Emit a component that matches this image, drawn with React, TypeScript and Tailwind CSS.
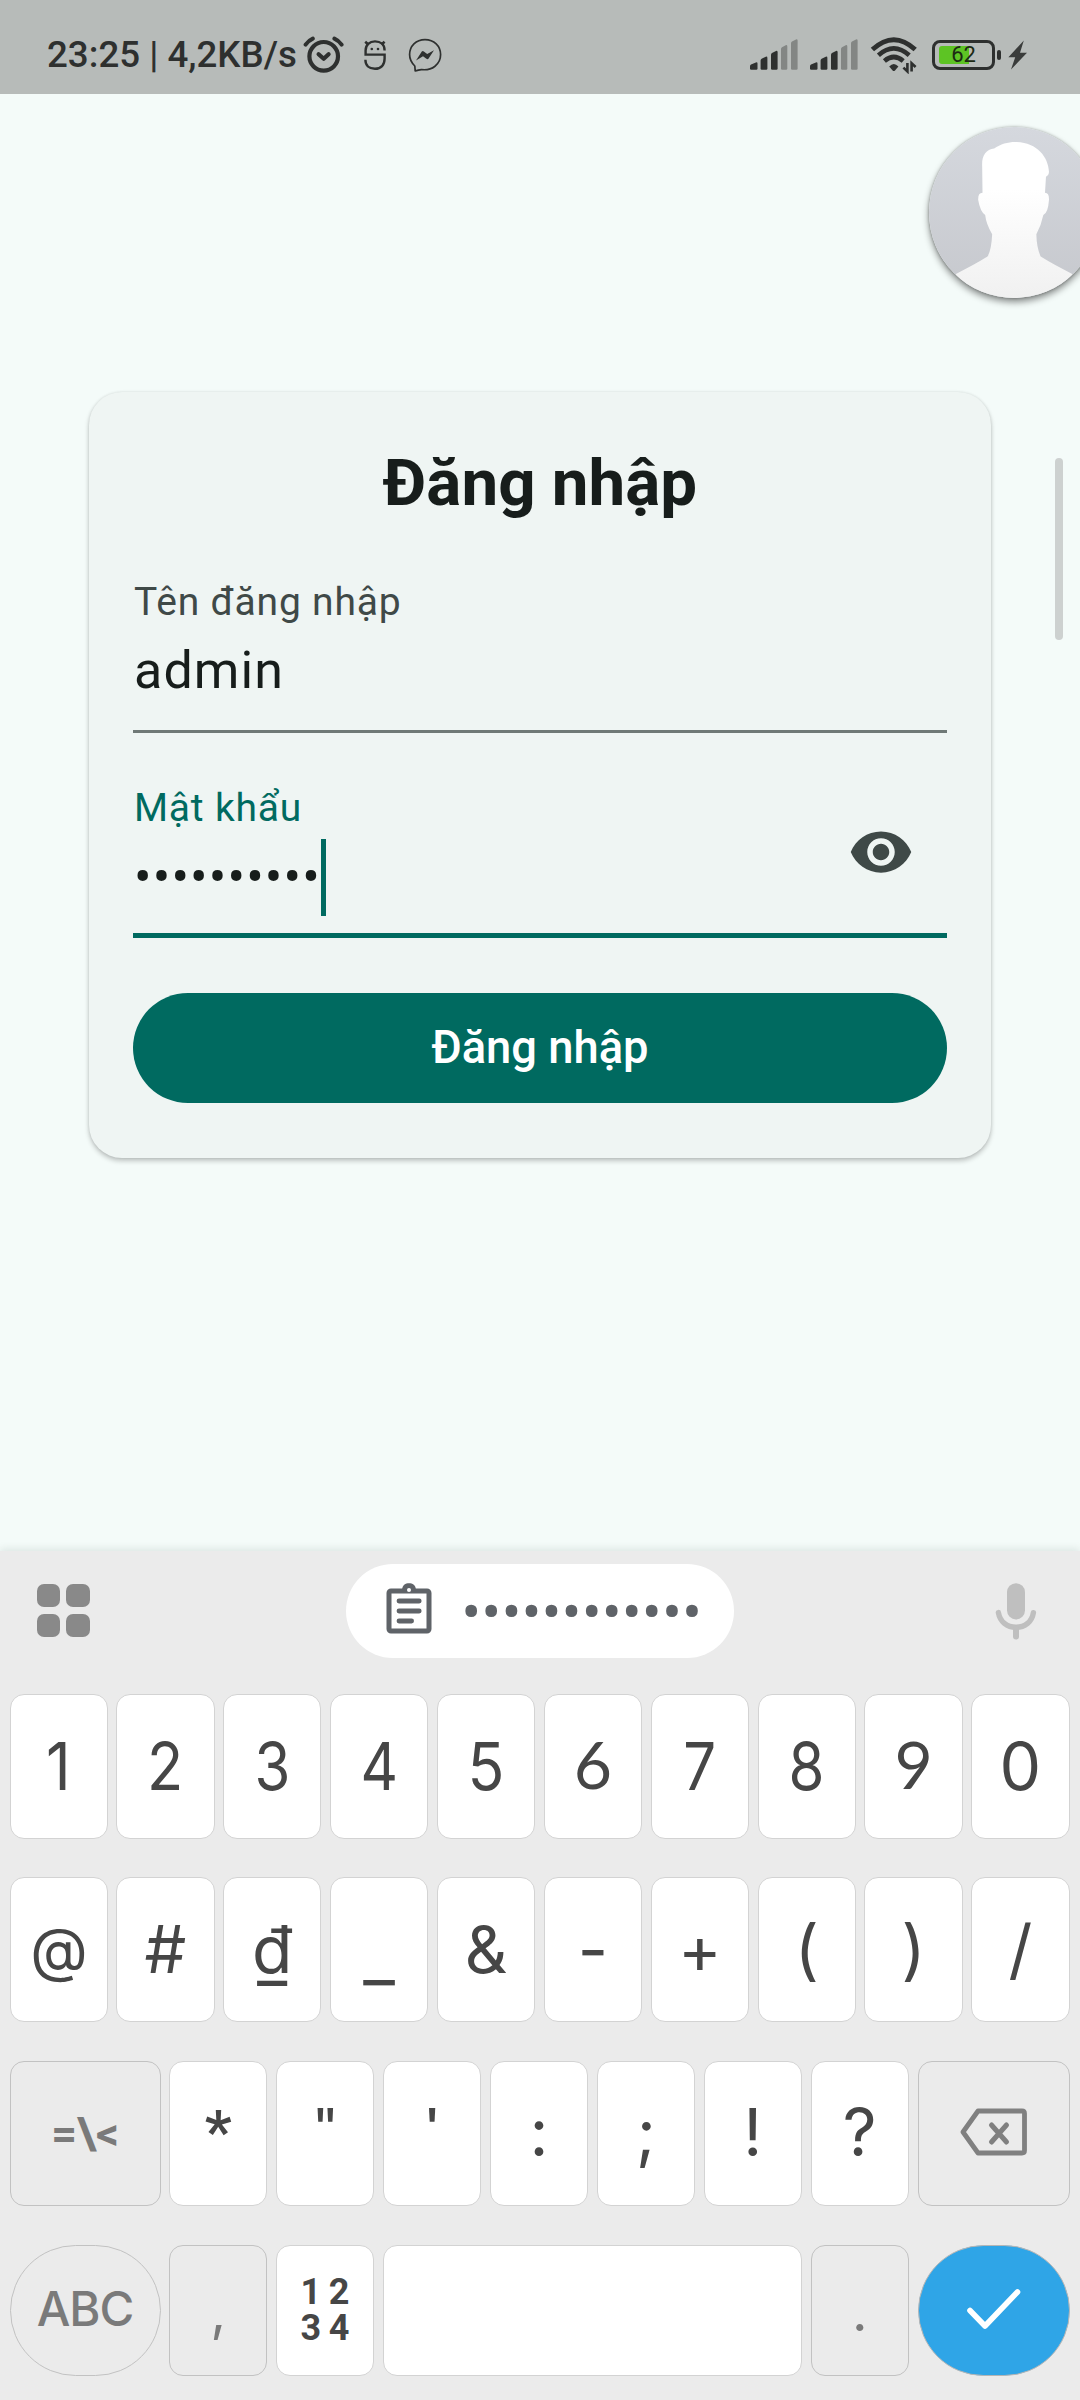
import type { ReactNode } from "react";

/* ---------- status bar icons ---------- */

function AlarmIcon() {
  return (
    <svg className="ml-[6px] h-[40px] w-[42px]" viewBox="303 34 42 40" fill="none" stroke="#2e302f" strokeLinecap="round" strokeLinejoin="round">
      <circle cx="323.7" cy="55.3" r="14.3" strokeWidth="4.2" />
      <path d="M305.6 43.6Q308.5 39.5 312.8 37.6M341.6 43.6Q338.7 39.5 334.4 37.6" strokeWidth="4" />
      <path d="M318.6 53.2L323.7 57.8L328.6 53.2" strokeWidth="4.2" />
    </svg>
  );
}

function RobotIcon() {
  return (
    <svg className="ml-[17px] h-[34px] w-[26px]" viewBox="362 37 26 34" fill="none" stroke="#2e302f" strokeWidth="2.4">
      <path d="M384.6 49.5C384.6 43.5 380.5 40.4 375 40.4C369.5 40.4 365.6 44 365.6 49.5V53.6H384.6V57.5C384.6 64 381 67.8 375 67.8C369 67.8 365.4 64.5 365.4 58.8" />
      <path d="M365.2 40.8L368.4 43.6M384.6 40.8L381.4 43.6" strokeWidth="2.6" />
      <circle cx="371.8" cy="48" r="1.3" fill="#2e302f" stroke="none" />
      <circle cx="378" cy="48" r="1.3" fill="#2e302f" stroke="none" />
    </svg>
  );
}

function MessengerIcon() {
  return (
    <svg className="ml-[19px] h-[36px] w-[36px]" viewBox="407 36 36 36" fill="none" stroke="#2e302f">
      <path d="M425 38.6C416 38.6 409.6 45 409.6 53.6C409.6 58.6 411.6 62 414.8 65L415.2 69.9C418 69.6 419.4 68.4 421.6 68.6C432 69.8 440.6 63.4 440.6 53.6C440.6 45 434 38.6 425 38.6Z" strokeWidth="1.7" strokeLinejoin="round" />
      <path d="M416 59.6L421.8 50.6Q422.6 49.6 423.8 50.4L427.2 53L434 49.2L428.6 57.6Q427.8 58.8 426.4 57.8L423 55.2Z" fill="#2e302f" stroke="none" />
    </svg>
  );
}

const bars = [
  { x: 0, w: 7.5, top: 23, on: true },
  { x: 10.6, w: 6.8, top: 17.3, on: true },
  { x: 21, w: 6.6, top: 11.5, on: true },
  { x: 31, w: 6.3, top: 5.8, on: false },
  { x: 41, w: 6.6, top: 0, on: false },
];

function SignalIcon() {
  return (
    <svg className="h-[31px] w-[48px]" viewBox="0 0 48 31">
      {bars.map((b) => (
        <path
          key={b.x}
          d={`M${b.x} ${b.top + 4.2}Q${b.x} ${b.top + 3} ${b.x + 1} ${b.top + 2.4}L${b.x + b.w - 1.6} ${b.top + 0.4}Q${b.x + b.w} ${b.top} ${b.x + b.w} ${b.top + 1.6}V29.6Q${b.x + b.w} 30.8 ${b.x + b.w - 1.2} 30.8H${b.x + 1.2}Q${b.x} 30.8 ${b.x} 29.6Z`}
          fill={b.on ? "#2e302f" : "#838684"}
        />
      ))}
    </svg>
  );
}

function WifiIcon() {
  return (
    <svg className="ml-[12px] h-[38px] w-[48px]" viewBox="870 36 48 38" fill="none" stroke="#2e302f">
      <path d="M872.4 49.6Q893.8 29.8 915.2 49.6" strokeWidth="4.8" />
      <path d="M878.4 55.3Q893.8 41.6 909.2 55.3" strokeWidth="4.6" />
      <path d="M884.4 61Q893.8 53 903.2 61" strokeWidth="4.6" />
      <path d="M889.2 66.6Q893.8 61.4 898.4 66.6L895 70.4Q893.8 71.4 892.6 70.4Z" fill="#2e302f" stroke="none" />
      <path d="M907.4 63V71.4L903.4 67.6M911.6 71.4V63.2L915.6 67" strokeWidth="2.6" />
    </svg>
  );
}

function Battery() {
  return (
    <div className="ml-[14px] flex items-center">
      <div className="relative flex h-[30px] w-[63px] items-center rounded-[8px] border-3 border-[#2e302f] pl-[4px]">
        <div className="h-[18px] w-[30px] rounded-l-[3px] bg-[#5dc424]" />
        <span className="absolute inset-0 flex items-center justify-center text-[22px] leading-none text-[#1c2a14]">62</span>
      </div>
      <div className="ml-[2px] h-[10px] w-[4px] rounded-[2px] bg-[#2e302f]" />
      <svg className="ml-[7px] h-[30px] w-[20px]" viewBox="1008 39 20 30" fill="#3a3c3b">
        <path d="M1023.8 39.6L1008.4 56.2H1015.2L1011 68.6L1027 51.8H1020Z" />
      </svg>
    </div>
  );
}

function StatusBar() {
  return (
    <div className="flex h-[94px] items-center justify-between bg-[#b7bbb9] pr-[52px] pl-[47px] pt-[15px]">
      <div className="flex items-center">
        <span className="w-[250px] whitespace-nowrap text-[36.7px] leading-[44px] font-medium text-[#2e302f]">23:25 | 4,2KB/s</span>
        <AlarmIcon />
        <RobotIcon />
        <MessengerIcon />
      </div>
      <div className="flex items-center">
        <SignalIcon />
        <div className="w-[12px]" />
        <SignalIcon />
        <WifiIcon />
        <Battery />
      </div>
    </div>
  );
}

function ChatHead() {
  return (
    <div className="absolute top-[127px] left-[928.5px] h-[170.5px] w-[170.5px] overflow-hidden rounded-full shadow-[0_4px_7px_rgba(0,0,0,0.45),0_0_3px_rgba(0,0,0,0.3)]">
      <svg className="h-full w-full" viewBox="684 380 513 513">
        <defs>
          <linearGradient id="backdrop" x1="0" y1="0" x2="0" y2="1">
            <stop offset="0" stopColor="#d5d8de" />
            <stop offset="1" stopColor="#c6c8cd" />
          </linearGradient>
          <linearGradient id="figure" x1="0" y1="0" x2="0" y2="1">
            <stop offset="0.3" stopColor="#ffffff" />
            <stop offset="1" stopColor="#f0f0f0" />
          </linearGradient>
        </defs>
        <rect x="684" y="380" width="513" height="513" fill="url(#backdrop)" />
        <path
          d="M844 500C842 466 855 448 880 445C900 430 925 424 948 425C1010 428 1043 470 1045 515Q1045 525 1036 530L1033 578Q1046 578 1045 600Q1042 640 1028 645Q1022 675 1007 703Q1008 745 1020 770Q1060 795 1115 822L1130 900H750L765 822Q820 795 860 770Q872 750 874 703Q856 672 853 645Q838 635 832 600Q831 578 845 578Z"
          fill="url(#figure)"
        />
      </svg>
    </div>
  );
}

/* ---------- login form ---------- */

function LoginCard() {
  return (
    <div className="mx-[89px] mt-[298px] h-[766px] rounded-[33px] bg-[#eff5f3] px-[44px] pt-[53px] shadow-[0_3px_5px_rgba(0,0,0,0.22),0_0_3px_rgba(0,0,0,0.1)]">
      <h1 className="text-center text-[65.5px] leading-[76px] font-bold text-[#171d1b]">Đăng nhập</h1>
      <div className="mt-[58px] h-[154px] border-b-3 border-[#6f7976]">
        <div className="pl-px text-[39px] leading-[46px] tracking-[0.8px] text-[#3f4947]">Tên đăng nhập</div>
        <div className="mt-[16px] pl-px text-[52px] leading-[60px] tracking-[1.1px] text-[#171d1b]">admin</div>
      </div>
      <div className="mt-[52px] flex h-[153px] border-b-5 border-[#006a60]">
        <div className="flex-1">
          <div className="pl-px text-[39px] leading-[46px] tracking-[0.8px] text-[#006a60]">Mật khẩu</div>
          <div className="mt-[8px] flex h-[77px] items-center">
            <span className="pl-px text-[52px] leading-[75px] tracking-[1.15px] text-[#171d1b]">••••••••••</span>
            <div className="h-[77px] w-[5.5px] bg-[#006a60]" />
          </div>
        </div>
        <svg className="mt-[34px] mr-[33px] h-[66px] w-[66px]" viewBox="0 0 24 24" fill="#3f4947">
          <path d="M12 4.5C7 4.5 2.73 7.61 1 12c1.73 4.39 6 7.5 11 7.5s9.27-3.11 11-7.5c-1.73-4.39-6-7.5-11-7.5zM12 17c-2.76 0-5-2.24-5-5s2.24-5 5-5 5 2.24 5 5-2.24 5-5 5zm0-8c-1.66 0-3 1.34-3 3s1.34 3 3 3 3-1.34 3-3-1.34-3-3-3z" />
        </svg>
      </div>
      <button className="mt-[55px] block h-[110px] w-full rounded-full bg-[#006a60] text-[45.3px] font-medium text-white">Đăng nhập</button>
    </div>
  );
}

/* ---------- keyboard ---------- */

function Key({ children, className = "" }: { children?: ReactNode; className?: string }) {
  return (
    <div className={`flex items-center justify-center border ${className}`}>{children}</div>
  );
}

const white = "rounded-[14px] border-[#d3d3d3] bg-white pb-[2px] text-[#464646] text-[66px] leading-none";
const grey = "rounded-[14px] border-[#c2c2c2] bg-[#ebebeb] text-[#7a7a7a]";

const glyphStyle: Record<string, string> = {
  "1": "scale-x-92",
  "2": "scale-x-90",
  "3": "scale-x-88",
  "4": "scale-x-88",
  "5": "scale-x-92",
  "6": "pb-[4px] font-[Lato,sans-serif]",
  "7": "scale-x-88",
  "8": "scale-x-88",
  "9": "pb-[4px] font-[Lato,sans-serif]",
  "_": "pt-[14px] scale-x-105",
  "@": "scale-90",
  "*": "font-[Roboto,sans-serif] text-[60px] font-semibold",
  "\"": "origin-[50%_9px] scale-x-90 scale-y-75",
  "'": "origin-[50%_9px] scale-y-75",
};

function Glyph({ char }: { char: string }) {
  return <span className={`inline-block ${glyphStyle[char] ?? ""}`}>{char}</span>;
}

function GridIcon() {
  return (
    <div className="grid h-[53px] w-[53px] grid-cols-2 gap-[6.5px]">
      <div className="rounded-[7px] bg-[#898989]" />
      <div className="rounded-[7px] bg-[#898989]" />
      <div className="rounded-[7px] bg-[#898989]" />
      <div className="rounded-[7px] bg-[#898989]" />
    </div>
  );
}

function ClipboardIcon() {
  return (
    <svg className="mb-[3px] h-[52px] w-[46px]" viewBox="386 1583 46 52" fill="none" stroke="#5f6368" strokeLinecap="round">
      <rect x="389" y="1591" width="40" height="40" rx="2" strokeWidth="5" />
      <path d="M402 1590.5C402 1585 405.6 1583.2 409 1583.2C412.4 1583.2 416 1585 416 1590.5Z" fill="#5f6368" stroke="none" />
      <circle cx="409" cy="1590" r="2" fill="#fff" stroke="none" />
      <path d="M399 1601H419.2M399 1611H419.2M399 1621H411.6" strokeWidth="4.8" />
    </svg>
  );
}

function MicIcon() {
  return (
    <svg className="h-[58px] w-[42px]" viewBox="995 1581 42 58" fill="none" stroke="#bfbfbf" strokeLinecap="round">
      <path d="M1016 1591.2V1609.4" strokeWidth="18" />
      <path d="M998.4 1611.6C1000 1620.8 1007 1626.3 1016 1626.3C1025 1626.3 1032 1620.8 1033.4 1611.6" strokeWidth="5.4" />
      <path d="M1016 1627V1635.6" strokeWidth="6" />
    </svg>
  );
}

const digits = ["1", "2", "3", "4", "5", "6", "7", "8", "9", "0"];
const symbols = ["@", "#", "₫", "_", "&", "-", "+", "(", ")", "/"];
const marks = ["*", "\"", "'", ":", ";", "!", "?"];

function Keyboard() {
  return (
    <div className="mt-auto h-[849px] bg-[#ebebeb] pr-[10.5px] pl-[9.5px] font-[Inter,sans-serif] shadow-[0_-2px_8px_rgba(0,40,30,0.1)]">
      <div className="flex h-[143px] items-center justify-between pr-[33px] pb-[24px] pl-[27px]">
        <GridIcon />
        <div className="mr-[5px] flex h-[94px] w-[388px] items-center rounded-full bg-white pl-[40px]">
          <ClipboardIcon />
          <span className="ml-[30px] pt-[2px] font-[Roboto,sans-serif] text-[58px] leading-none tracking-[0.5px] text-[#5f6368]">••••••••••••</span>
        </div>
        <MicIcon />
      </div>
      <div className="grid h-[145px] grid-cols-10 gap-[8.7px]">
        {digits.map((d) => (
          <Key key={d} className={white}>
            <Glyph char={d} />
          </Key>
        ))}
      </div>
      <div className="mt-[38.4px] grid h-[145px] grid-cols-10 gap-[8.7px]">
        {symbols.map((s) => (
          <Key key={s} className={white}>
            <Glyph char={s} />
          </Key>
        ))}
      </div>
      <div className="mt-[38.6px] grid h-[145px] grid-cols-[151px_repeat(7,minmax(0,1fr))_152px] gap-[8.7px]">
        <Key className={`${grey} font-[Roboto,sans-serif] text-[45px] font-bold`}>=\&lt;</Key>
        {marks.map((s) => (
          <Key key={s} className={white}>
            <Glyph char={s} />
          </Key>
        ))}
        <Key className={grey}>
          <svg className="h-[52px] w-[68px]" viewBox="0 0 68 52" fill="none" stroke="#808080" strokeLinecap="round" strokeLinejoin="round">
            <path d="M18 4H62Q64.500 4 64.500 6.500V43.500Q64.500 46 62 46H18L3 25Z" strokeWidth="4.8" />
            <path d="M31.500 18L46.500 35M46.500 18L31.500 35" strokeWidth="5" />
          </svg>
        </Key>
      </div>
      <div className="mt-[38.6px] grid h-[131px] grid-cols-[151px_98px_98px_minmax(0,1fr)_98px_152px] gap-[8.7px]">
        <Key className="rounded-full border-[#c2c2c2] pb-[2px] text-[47.5px] tracking-[-1px] font-medium text-[#7a7a7a]">ABC</Key>
        <Key className={`${grey} pt-[3px] text-[54px]`}>,</Key>
        <Key className={`${white} font-[Roboto,sans-serif]`}>
          <span className="pt-[2px] text-center text-[36px] leading-[36px] font-bold [word-spacing:-1.3px]">
            1 2<br />3 4
          </span>
        </Key>
        <Key className={white} />
        <Key className={`${grey} pt-[3px] text-[54px]`}>.</Key>
        <Key className="rounded-full border-[#b5b5b5] bg-[#2fa5e7] pb-[2px]">
          <svg className="h-[44px] w-[58px]" viewBox="0 0 58 44" fill="none" stroke="#fff" strokeWidth="5.6" strokeLinecap="round" strokeLinejoin="round">
            <path d="M5 23.500L20 39L52.500 5" />
          </svg>
        </Key>
      </div>
    </div>
  );
}

export default function App() {
  return (
    <div className="relative flex h-[2400px] w-[1080px] flex-col overflow-hidden bg-[#f4fbf9] font-[Roboto,sans-serif]">
      <StatusBar />
      <ChatHead />
      <LoginCard />
      <div className="absolute top-[458px] right-[17px] h-[182px] w-[8px] rounded-full bg-[#cdd1d0]" />
      <Keyboard />
    </div>
  );
}
